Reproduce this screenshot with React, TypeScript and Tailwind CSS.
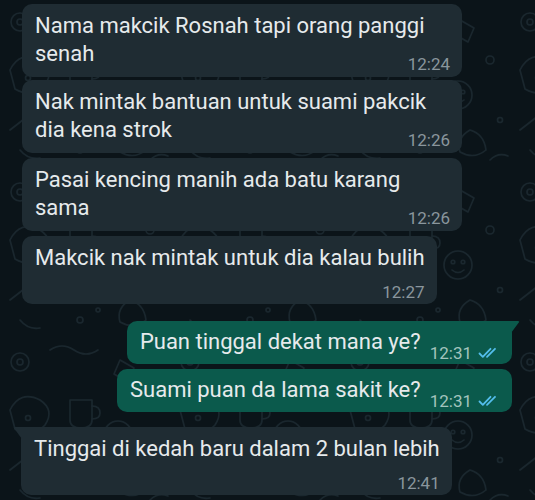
import React from "react";

function Ticks() {
  return (
    <svg width="22" height="12" viewBox="0 0 22 12" fill="none" className="ml-[6px] mb-[3px]">
      <path d="M1.5 6.5 L4.8 9.8 L12.5 1.8" stroke="#53bdeb" strokeWidth="1.8" strokeLinecap="round" strokeLinejoin="round" />
      <path d="M9 9.8 L17 1.8" stroke="#53bdeb" strokeWidth="1.8" strokeLinecap="round" />
    </svg>
  );
}

function TailLeft() {
  return (
    <svg width="9" height="13" viewBox="0 0 9 13" className="absolute -left-[8px] top-0">
      <path d="M9 0 H2 Q0 0 1.2 1.6 L9 12 Z" fill="#1f2c33" />
    </svg>
  );
}

function TailRight() {
  return (
    <svg width="9" height="13" viewBox="0 0 9 13" className="absolute -right-[8px] top-0">
      <path d="M0 0 H7 Q9 0 7.8 1.6 L0 12 Z" fill="#0b5a4c" />
    </svg>
  );
}

function Incoming({
  lines,
  time,
  wide,
  own,
  tail,
  className,
}: {
  lines: string[];
  time: string;
  wide?: boolean;
  own?: boolean;
  tail?: boolean;
  className?: string;
}) {
  return (
    <div
      className={
        "relative bg-[#1f2c33] pl-[13px] pr-[12px] pt-[8px] " +
        (own ? "pb-[3px] " : "pb-[4px] ") +
        (wide ? "w-[440px] " : "w-fit ") +
        (tail ? "rounded-[10px] rounded-tl-none " : "rounded-[10px] ") +
        (className ?? "")
      }
    >
      {tail && <TailLeft />}
      <div className="text-[22px] leading-[28px] text-[#e6eaec] whitespace-nowrap">
        {lines.map((l, i) => (
          <div key={i}>{l}</div>
        ))}
      </div>
      <div className={"flex justify-end " + (own ? "mt-[12px]" : "-mt-[12px]")}>
        <span className="text-[17px] leading-[17px] text-[#8a969d]">{time}</span>
      </div>
    </div>
  );
}

function Outgoing({ text, time, tail, className }: { text: string; time: string; tail?: boolean; className?: string }) {
  return (
    <div
      className={
        "relative w-fit ml-auto bg-[#0b5a4c] pl-[13px] pr-[12px] pt-[7px] pb-[2px] " +
        (tail ? "rounded-[10px] rounded-tr-none " : "rounded-[10px] ") +
        (className ?? "")
      }
    >
      {tail && <TailRight />}
      <div className="flex items-end">
        <span className="text-[22px] leading-[28px] text-[#e6eaec] mb-[6px] whitespace-nowrap">{text}</span>
        <span className="ml-[9px] text-[17px] leading-[17px] text-[#a3c4bd]">{time}</span>
        <Ticks />
      </div>
    </div>
  );
}

function Doodles() {
  return (
    <svg className="absolute inset-0" width="535" height="500" viewBox="0 0 535 500">
      <defs>
        <pattern id="doodle" width="170" height="170" patternUnits="userSpaceOnUse">
          <g fill="none" stroke="#1a272e" strokeWidth="1.6" strokeLinecap="round" strokeLinejoin="round">
            <circle cx="20" cy="22" r="9" />
            <circle cx="20" cy="22" r="3" />
            <path d="M50 10 q12 -8 24 0 t24 0" />
            <path d="M120 20 l14 8 l-6 14 l-14 -8 z" />
            <circle cx="150" cy="60" r="4" />
            <path d="M10 70 q10 -20 30 -10 q15 10 5 25 q-12 14 -30 4 z" />
            <circle cx="28" cy="78" r="2.5" />
            <path d="M70 60 h22 v20 q0 8 -11 8 q-11 0 -11 -8 z" />
            <path d="M92 66 q8 0 8 7 q0 6 -8 6" />
            <circle cx="118" cy="95" r="14" />
            <circle cx="113" cy="92" r="1.8" />
            <circle cx="123" cy="92" r="1.8" />
            <path d="M112 100 q6 5 12 0" />
            <path d="M10 130 l18 -14 l18 14" />
            <path d="M55 120 q6 -12 18 -6 q10 6 4 18" />
            <circle cx="80" cy="150" r="3" />
            <circle cx="98" cy="140" r="2" />
            <path d="M130 130 q14 4 16 20 q-12 10 -26 2 q-4 -14 10 -22 z" />
            <path d="M20 150 q8 10 20 8" />
            <circle cx="160" cy="120" r="2.5" />
            <path d="M150 160 q8 -8 18 -4" />
          </g>
        </pattern>
      </defs>
      <rect width="535" height="500" fill="url(#doodle)" />
    </svg>
  );
}

export default function App() {
  return (
    <div className="relative w-[535px] h-[500px] overflow-hidden bg-[#0b1419] font-[Roboto,sans-serif]">
      <Doodles />
      <div className="relative flex flex-col pt-[4px] pr-[23px]">
        <Incoming className="ml-[22px]" wide lines={["Nama makcik Rosnah tapi orang panggi", "senah"]} time="12:24" />
        <Incoming className="ml-[22px] mt-[3px]" wide lines={["Nak mintak bantuan untuk suami pakcik", "dia kena strok"]} time="12:26" />
        <Incoming className="ml-[22px] mt-[5px]" wide lines={["Pasai kencing manih ada batu karang", "sama"]} time="12:26" />
        <Incoming className="ml-[22px] mt-[5px]" own lines={["Makcik nak mintak untuk dia kalau bulih"]} time="12:27" />
        <Outgoing className="mt-[17px]" tail text="Puan tinggal dekat mana ye?" time="12:31" />
        <Outgoing className="mt-[5px]" text="Suami puan da lama sakit ke?" time="12:31" />
        <Incoming className="ml-[21px] mt-[15px]" own tail lines={["Tinggai di kedah baru dalam 2 bulan lebih"]} time="12:41" />
      </div>
    </div>
  );
}
